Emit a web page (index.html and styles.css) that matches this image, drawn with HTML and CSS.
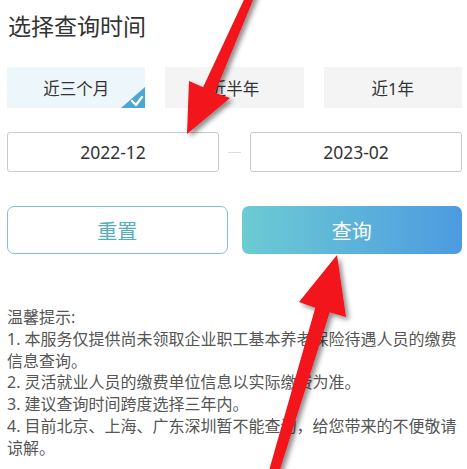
FILE: index.html
```html
<!DOCTYPE html>
<html lang="zh-CN">
<head>
  <meta charset="UTF-8" />
  <meta name="viewport" content="width=device-width, initial-scale=1.0">
  <title>选择查询时间</title>
  <link rel="stylesheet" href="styles.css">
</head>
<body>

  <h1 class="title">选择查询时间</h1>

  <!-- Quick period chips -->
  <div class="periods">
    <div class="chip active">
      近三个月
      <span class="corner">
        <svg width="24" height="21" viewBox="0 0 24 21">
          <polygon points="24,0 24,21 0,21" fill="#4ba6d6"/>
          <polyline points="11,14 15,18 21,10" fill="none" stroke="#fff" stroke-width="2.4" stroke-linecap="round" stroke-linejoin="round"/>
        </svg>
      </span>
    </div>
    <div class="chip">近半年</div>
    <div class="chip">近1年</div>
  </div>

  <!-- Date range -->
  <div class="range">
    <div class="date-box">2022-12</div>
    <div class="dash"></div>
    <div class="date-box">2023-02</div>
  </div>

  <!-- Actions -->
  <div class="actions">
    <button class="btn reset">重置</button>
    <button class="btn query">查询</button>
  </div>

  <!-- Tips -->
  <div class="tips">
    <p>温馨提示:</p>
    <p>1. 本服务仅提供尚未领取企业职工基本养老保险待遇人员的缴费信息查询。</p>
    <p>2. 灵活就业人员的缴费单位信息以实际缴费为准。</p>
    <p>3. 建议查询时间跨度选择三年内。</p>
    <p>4. 目前北京、上海、广东深圳暂不能查询，给您带来的不便敬请谅解。</p>
  </div>

  <!-- Red annotation arrows -->
  <svg class="arrows" width="467" height="469" viewBox="0 0 467 469">
    <defs>
      <filter id="shadow" x="-20%" y="-20%" width="140%" height="140%">
        <feDropShadow dx="3" dy="3" stdDeviation="2.5" flood-color="#000" flood-opacity="0.45"/>
      </filter>
    </defs>
    <polygon filter="url(#shadow)" fill="#f2121a"
      points="248.4,-9.7 203.1,87.3 189,81 187,134 230,98 214.9,92.7 255.6,-6.3"/>
    <polygon filter="url(#shadow)" fill="#f2121a"
      points="337,255 346,317 329.7,312.2 277.8,476.4 268.2,473.6 315.3,307.8 299,302"/>
  </svg>

</body>
</html>
```

FILE: styles.css
```css
body {
  font-family: "Noto Sans", "Noto Sans CJK SC", sans-serif;
  margin: 0;
  padding: 0 5px 0 7px;
  background: #fff;
  color: #333;
  position: relative;
  width: 455px;
  height: 469px;
  overflow: hidden;
}

.title {
  margin: 10px 0 0 1px;
  font-size: 23px;
  line-height: 32px;
  font-weight: normal;
  color: #333;
}

.periods {
  display: grid;
  grid-template-columns: 1fr 1fr 1fr;
  gap: 20px;
  margin-top: 25px;
}

.chip {
  position: relative;
  height: 41px;
  display: flex;
  align-items: center;
  justify-content: center;
  background: #f4f4f4;
  font-size: 16.5px;
  color: #333;
  overflow: hidden;
}

.chip.active {
  background: #edf6fa;
}

.corner {
  position: absolute;
  right: 0;
  bottom: 0;
  line-height: 0;
}

.range {
  display: grid;
  grid-template-columns: 1fr 31px 1fr;
  margin-top: 24px;
  align-items: center;
}

.date-box {
  height: 38px;
  border: 1px solid #c9c9c9;
  border-radius: 3px;
  display: flex;
  align-items: center;
  justify-content: center;
  font-size: 17.5px;
  color: #333;
}

.dash {
  height: 1px;
  margin: 0 9px;
  background: #dcdcdc;
}

.actions {
  display: grid;
  grid-template-columns: 1fr 1fr;
  gap: 14px;
  margin-top: 34px;
}

.btn {
  height: 48px;
  border-radius: 7px;
  font-family: inherit;
  font-size: 20px;
  cursor: pointer;
}

.reset {
  background: #fff;
  border: 1px solid #7fc3cd;
  color: #54adba;
}

.query {
  border: none;
  color: #fff;
  background: linear-gradient(90deg, #6ccbd3, #4c9be0);
}

.tips {
  margin-top: 53px;
  font-size: 16px;
  line-height: 21.8px;
  color: #555;
}

.tips p {
  margin: 0;
}

.arrows {
  position: absolute;
  left: 0;
  top: 0;
  pointer-events: none;
}
```
